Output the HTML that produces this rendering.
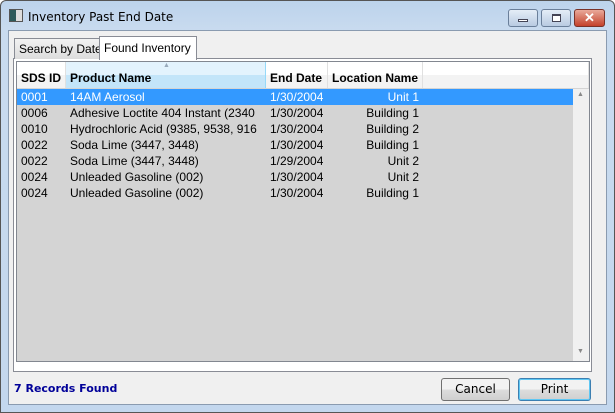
<!DOCTYPE html>
<html><head><style>
*{margin:0;padding:0;box-sizing:border-box}
body{width:615px;height:413px;overflow:hidden;background:#fff;font-family:"Liberation Sans",sans-serif;font-size:12px;position:relative}
.abs{position:absolute}
.frame{left:0;top:0;width:615px;height:413px;background:linear-gradient(#bcd3ec,#c9dbef 30px,#c3d7ee);border:1px solid #555;border-radius:6px 6px 0 0}
.client{left:8px;top:30px;width:599px;height:375px;background:#f0f0f0;border:1px solid #8a9bb0}
.title{left:28px;top:10px;font-family:"DejaVu Sans","Liberation Sans",sans-serif;font-size:12px;color:#000}
.wb{top:9px;height:18px;border:1px solid #6a7f9a;border-radius:3px;background:linear-gradient(#e4edf7,#b9cbe2)}
.tab{height:21px;border:1px solid #898c95;border-bottom:none;background:linear-gradient(#f2f2f2,#dcdcdc);padding:3px 4px;font-family:"Liberation Sans",sans-serif;font-size:12px;white-space:nowrap;overflow:hidden}
.panel{left:13px;top:58px;width:579px;height:314px;border:1px solid #898c95;background:#fff}
.list{left:16px;top:61px;width:574px;height:301px;border:1px solid #828790;background:#d4d4d4}
.hdr{top:62px;height:26px;background:#fff;border-right:1px solid #e0e0e0;font-weight:bold;font-size:12px;padding:9px 0 0 4px;background:linear-gradient(#fff 50%,#f3f3f3 50%);white-space:nowrap}
.row{height:16px;font-size:12px;line-height:16px}
.c{position:absolute;white-space:nowrap;overflow:hidden}
.btn{top:378px;height:23px;border:1px solid #707070;border-radius:3px;background:linear-gradient(#f2f2f2 50%,#dddddd 50%,#cfcfcf);text-align:center;line-height:21px;font-family:"DejaVu Sans","Liberation Sans",sans-serif;font-size:12px}
</style></head><body>
<div class="abs frame"></div>
<div class="abs" style="left:9px;top:9px;width:14px;height:13px;border:1px solid #555;background:linear-gradient(90deg,#2d5a5a 50%,#ddd 50%)"></div>
<div class="abs title">Inventory Past End Date</div>
<div class="abs wb" style="left:508px;width:30px"><div class="abs" style="left:9px;top:9px;width:10px;height:3px;border:1px solid #445;background:#fff"></div></div>
<div class="abs wb" style="left:541px;width:30px"><div class="abs" style="left:10px;top:4px;width:9px;height:8px;border:1px solid #445;border-top-width:2px;background:#fff"></div></div>
<div class="abs wb" style="left:574px;width:31px;background:linear-gradient(#e9a99a,#c4412b);border-color:#7a3228;color:#fff;font-weight:bold;text-align:center;line-height:16px;font-size:13px">✕</div>
<div class="abs client"></div>
<div class="abs panel"></div>
<div class="abs tab" style="left:14px;top:38px;width:86px">Search by Date</div>
<div class="abs tab" style="left:99px;top:36px;width:98px;height:24px;background:#fff;border-color:#898c95;z-index:2;padding-top:4px">Found Inventory</div>
<div class="abs list"></div>
<div class="abs hdr" style="left:17px;width:49px">SDS ID</div>
<div class="abs hdr" style="left:66px;width:200px;background:linear-gradient(#e3f3fd 50%,#c3e5f9 50%);border-color:#96d9f9">Product Name</div>
<div class="abs hdr" style="left:266px;width:62px">End Date</div>
<div class="abs hdr" style="left:328px;width:95px">Location Name</div>
<div class="abs hdr" style="left:423px;width:166px;padding:0"></div>
<div class="abs" style="left:163px;top:62px;font-size:7px;color:#9ab">▲</div>
<div class="abs" style="left:17px;top:89px;width:556px">
<div class="row" style="background:#3399ff;color:#fff;position:relative"><span class="c" style="left:4px">0001</span><span class="c" style="left:53px">14AM Aerosol</span><span class="c" style="left:253px">1/30/2004</span><span class="c" style="left:311px;width:91px;text-align:right">Unit 1</span></div>
<div class="row" style="position:relative"><span class="c" style="left:4px">0006</span><span class="c" style="left:53px;width:196px">Adhesive Loctite 404 Instant (2340</span><span class="c" style="left:253px">1/30/2004</span><span class="c" style="left:311px;width:91px;text-align:right">Building 1</span></div>
<div class="row" style="position:relative"><span class="c" style="left:4px">0010</span><span class="c" style="left:53px;width:196px">Hydrochloric Acid (9385, 9538, 916</span><span class="c" style="left:253px">1/30/2004</span><span class="c" style="left:311px;width:91px;text-align:right">Building 2</span></div>
<div class="row" style="position:relative"><span class="c" style="left:4px">0022</span><span class="c" style="left:53px">Soda Lime (3447, 3448)</span><span class="c" style="left:253px">1/30/2004</span><span class="c" style="left:311px;width:91px;text-align:right">Building 1</span></div>
<div class="row" style="position:relative"><span class="c" style="left:4px">0022</span><span class="c" style="left:53px">Soda Lime (3447, 3448)</span><span class="c" style="left:253px">1/29/2004</span><span class="c" style="left:311px;width:91px;text-align:right">Unit 2</span></div>
<div class="row" style="position:relative"><span class="c" style="left:4px">0024</span><span class="c" style="left:53px">Unleaded Gasoline (002)</span><span class="c" style="left:253px">1/30/2004</span><span class="c" style="left:311px;width:91px;text-align:right">Unit 2</span></div>
<div class="row" style="position:relative"><span class="c" style="left:4px">0024</span><span class="c" style="left:53px">Unleaded Gasoline (002)</span><span class="c" style="left:253px">1/30/2004</span><span class="c" style="left:311px;width:91px;text-align:right">Building 1</span></div>
</div>
<div class="abs" style="left:573px;top:89px;width:16px;height:272px;background:#f0f0f0"></div>
<div class="abs" style="left:577px;top:91px;font-size:7px;color:#888">▲</div>
<div class="abs" style="left:577px;top:348px;font-size:7px;color:#888">▼</div>
<div class="abs" style="left:14px;top:382px;color:#000099;font-weight:bold;font-family:'DejaVu Sans','Liberation Sans',sans-serif;font-size:11px">7 Records Found</div>
<div class="abs btn" style="left:441px;width:69px">Cancel</div>
<div class="abs btn" style="left:518px;width:73px;border-color:#3c7fb1;box-shadow:inset 0 0 0 1px #5fc7f3">Print</div>
</body></html>
